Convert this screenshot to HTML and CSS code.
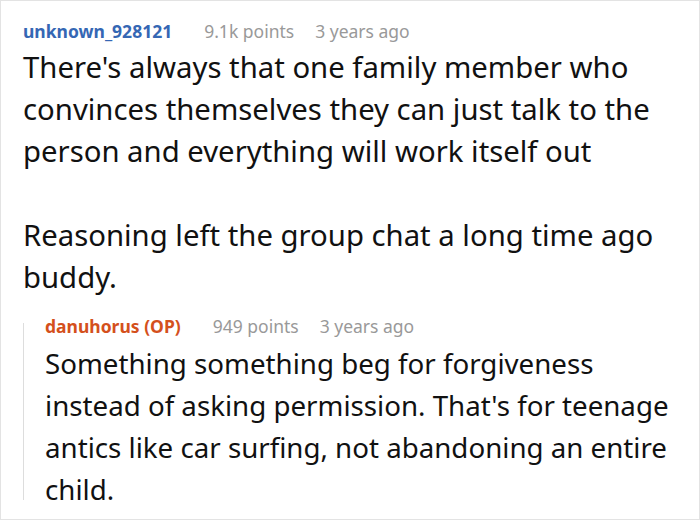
FILE: index.html
```html
<!DOCTYPE html>
<html>
<head>
<meta charset="utf-8">
<link rel="stylesheet" href="styles.css">
</head>
<body>
<div class="card">
  <div class="comment">
    <div class="meta">
      <span class="user">unknown_928121</span>
      <span class="info">9.1k points</span>
      <span class="info">3 years ago</span>
    </div>
    <div class="text">
      <p>There's always that one family member who convinces themselves they can just talk to the person and everything will work itself out</p>
      <p>Reasoning left the group chat a long time ago buddy.</p>
    </div>
    <div class="reply">
      <div class="rail"></div>
      <div class="reply-body">
        <div class="meta">
          <span class="user op">danuhorus (OP)</span>
          <span class="info">949 points</span>
          <span class="info">3 years ago</span>
        </div>
        <div class="text small">
          <p>Something something beg for forgiveness instead of asking permission. That's for teenage antics like car surfing, not abandoning an entire child.</p>
        </div>
      </div>
    </div>
  </div>
</div>
</body>
</html>
```
FILE: styles.css
```css
html, body {
  margin: 0;
  padding: 0;
  background: #fff;
}
.card {
  width: 700px;
  height: 520px;
  box-sizing: border-box;
  border: 1px solid #e3e3e3;
  overflow: hidden;
  font-family: "Noto Sans", sans-serif;
  color: #111;
}
.comment {
  padding: 17px 20px 0 22px;
}
.meta {
  display: flex;
  align-items: baseline;
  font-size: 17.5px;
  line-height: 26px;
}
.user {
  font-weight: bold;
  color: #3567b4;
  margin-right: 32px;
}
.user.op {
  color: #d4501c;
}
.info {
  color: #999;
  margin-right: 21px;
}
.text {
  font-size: 29.3px;
  line-height: 42px;
  margin-top: 2px;
}
.text.small {
  font-size: 27.7px;
  margin-top: 3px;
}
.text p {
  margin: 0 0 42px 0;
}
.text p:last-child {
  margin-bottom: 0;
}
.reply {
  margin-top: 15px;
  display: grid;
  grid-template-columns: 1px 1fr;
  column-gap: 21px;
}
.rail {
  background: #dddddd;
  margin: 10px 0 10px 0;
}
```
